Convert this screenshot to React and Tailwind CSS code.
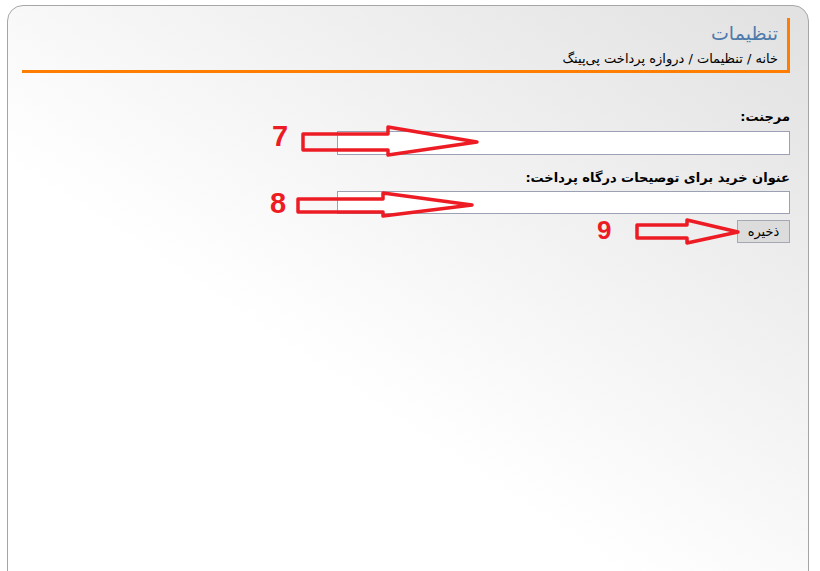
import React from "react";

const RED = "#ed1c24";

function Arrows() {
  const arrows = [
    "303,134 388,134 388,127 477,142 388,155 388,150 303,150",
    "298,199 383,199 383,193 472,205 383,216 383,212 298,212",
    "637,225 687,225 687,220 738,232 687,243 687,238 637,238",
  ];
  return (
    <svg
      className="absolute left-0 top-0 pointer-events-none"
      width="820"
      height="571"
      viewBox="0 0 820 571"
    >
      {arrows.map((p, i) => (
        <polygon
          key={i}
          points={p}
          fill="none"
          stroke={RED}
          strokeWidth="3.5"
          strokeLinejoin="round"
        />
      ))}
    </svg>
  );
}

export default function App() {
  return (
    <div
      className="relative w-[820px] h-[571px] overflow-hidden bg-white pt-[5px] pl-[7px] pr-[11px]"
      style={{ fontFamily: '"DejaVu Sans", "Noto Sans", sans-serif' }}
    >
      <div
        dir="rtl"
        className="h-[620px] rounded-t-[16px] border border-[#a6a6a6] bg-[linear-gradient(214deg,#e1e1e1_0%,#ffffff_60%,#ffffff_100%)] pt-[12px] pr-[18px] pl-[14px]"
      >
        <div className="border-r-[3px] border-b-[3px] border-[#ff7d00] h-[55px] pr-[9px] pt-[2px]">
          <div className="text-[19px] leading-[26px] text-[#4e7aab]">تنظیمات</div>
          <div className="text-[13px] leading-[22px] mt-[2px] text-black">
            خانه / تنظیمات / دروازه پرداخت پی‌پینگ
          </div>
        </div>

        <div className="mt-[34px] flex flex-col items-start">
          <div className="text-[13px] font-bold leading-[20px] text-black">مرجنت:</div>
          <input
            type="text"
            className="mt-[4px] w-[453px] h-[24px] border border-[#9ba1b3] bg-white outline-none"
          />
          <div className="mt-[13px] text-[13px] font-bold leading-[20px] text-black">
            عنوان خرید برای توصیحات درگاه پرداخت:
          </div>
          <input
            type="text"
            className="mt-[3px] w-[453px] h-[23px] border border-[#9ba1b3] bg-white outline-none"
          />
          <button className="mt-[6px] w-[53px] h-[23px] border border-[#a3a8b4] bg-[#dcdcdc] text-[13px] leading-none text-black">
            ذخیره
          </button>
        </div>
      </div>

      <Arrows />
      <div
        className="absolute left-[272px] top-[122px] text-[29px] font-bold leading-none text-[#ed1c24]"
        style={{ fontFamily: '"Liberation Sans", sans-serif' }}
      >
        7
      </div>
      <div
        className="absolute left-[270px] top-[189px] text-[29px] font-bold leading-none text-[#ed1c24]"
        style={{ fontFamily: '"Liberation Sans", sans-serif' }}
      >
        8
      </div>
      <div
        className="absolute left-[597px] top-[217px] text-[26px] font-bold leading-none text-[#ed1c24]"
        style={{ fontFamily: '"Liberation Sans", sans-serif' }}
      >
        9
      </div>
    </div>
  );
}
